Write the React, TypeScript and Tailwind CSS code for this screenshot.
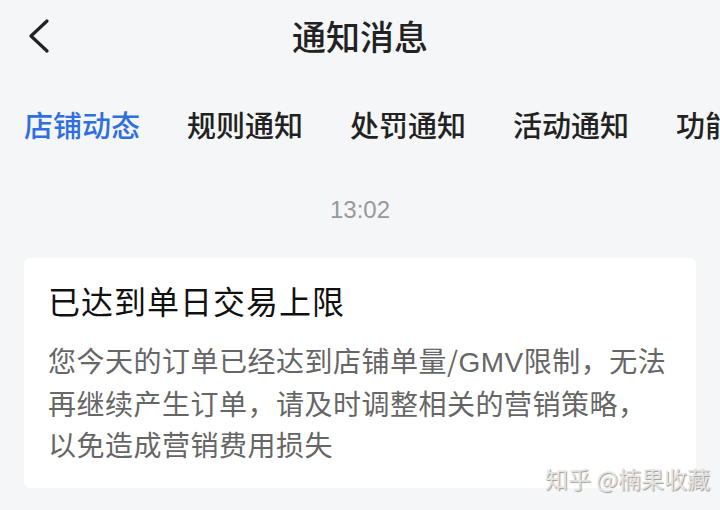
import React from "react";

const tabs = ["店铺动态", "规则通知", "处罚通知", "活动通知", "功能通知"];

const App = () => {
  return (
    <div
      className="relative w-[720px] h-[510px] overflow-hidden bg-[#f5f6f7]"
      style={{ fontFamily: '"Noto Sans CJK SC", "Noto Sans", sans-serif' }}
    >
      <div className="relative flex items-center justify-center h-[72px]">
        <svg
          className="absolute left-[26px] top-[19px]"
          width="26"
          height="34"
          viewBox="0 0 26 34"
          fill="none"
        >
          <path d="M21 2 L5 17 L21 32" stroke="#222" strokeWidth="3.2" strokeLinecap="round" strokeLinejoin="round" />
        </svg>
        <h1 className="text-[34px] leading-none text-[#222] font-medium">通知消息</h1>
      </div>

      <div className="flex gap-[47px] pl-[24px] pt-[38px] whitespace-nowrap">
        {tabs.map((tab, i) => (
          <span
            key={tab}
            className={`text-[29px] leading-none font-medium ${
              i === 0 ? "text-[#2f6fdf]" : "text-[#222]"
            }`}
          >
            {tab}
          </span>
        ))}
      </div>

      <p
        className="text-center text-[24px] leading-none text-[#999] mt-[59px]"
        style={{ fontFamily: '"Liberation Sans", Arial, sans-serif' }}
      >
        13:02
      </p>

      <div className="mx-[24px] mt-[36px] h-[230px] bg-white rounded-[6px] px-[24px] pt-[26px]">
        <h2 className="text-[32px] leading-none tracking-[1px] text-[#111]">已达到单日交易上限</h2>
        <p className="mt-[24px] text-[28px] leading-[41px] tracking-[0.5px] text-[#666] whitespace-nowrap">
          您今天的订单已经达到店铺单量/
          <span style={{ fontFamily: '"Liberation Sans", Arial, sans-serif' }}>GMV</span>
          限制，无法
          <br />
          再继续产生订单，请及时调整相关的营销策略，
          <br />
          以免造成营销费用损失
        </p>
      </div>

      <div
        className="absolute left-[545px] top-[467px] text-[23px] leading-none text-[#e4e4e4]"
        style={{ textShadow: "1px 1px 1px #9a9a9a" }}
      >
        知乎 @楠果收藏
      </div>
    </div>
  );
};

export default App;
